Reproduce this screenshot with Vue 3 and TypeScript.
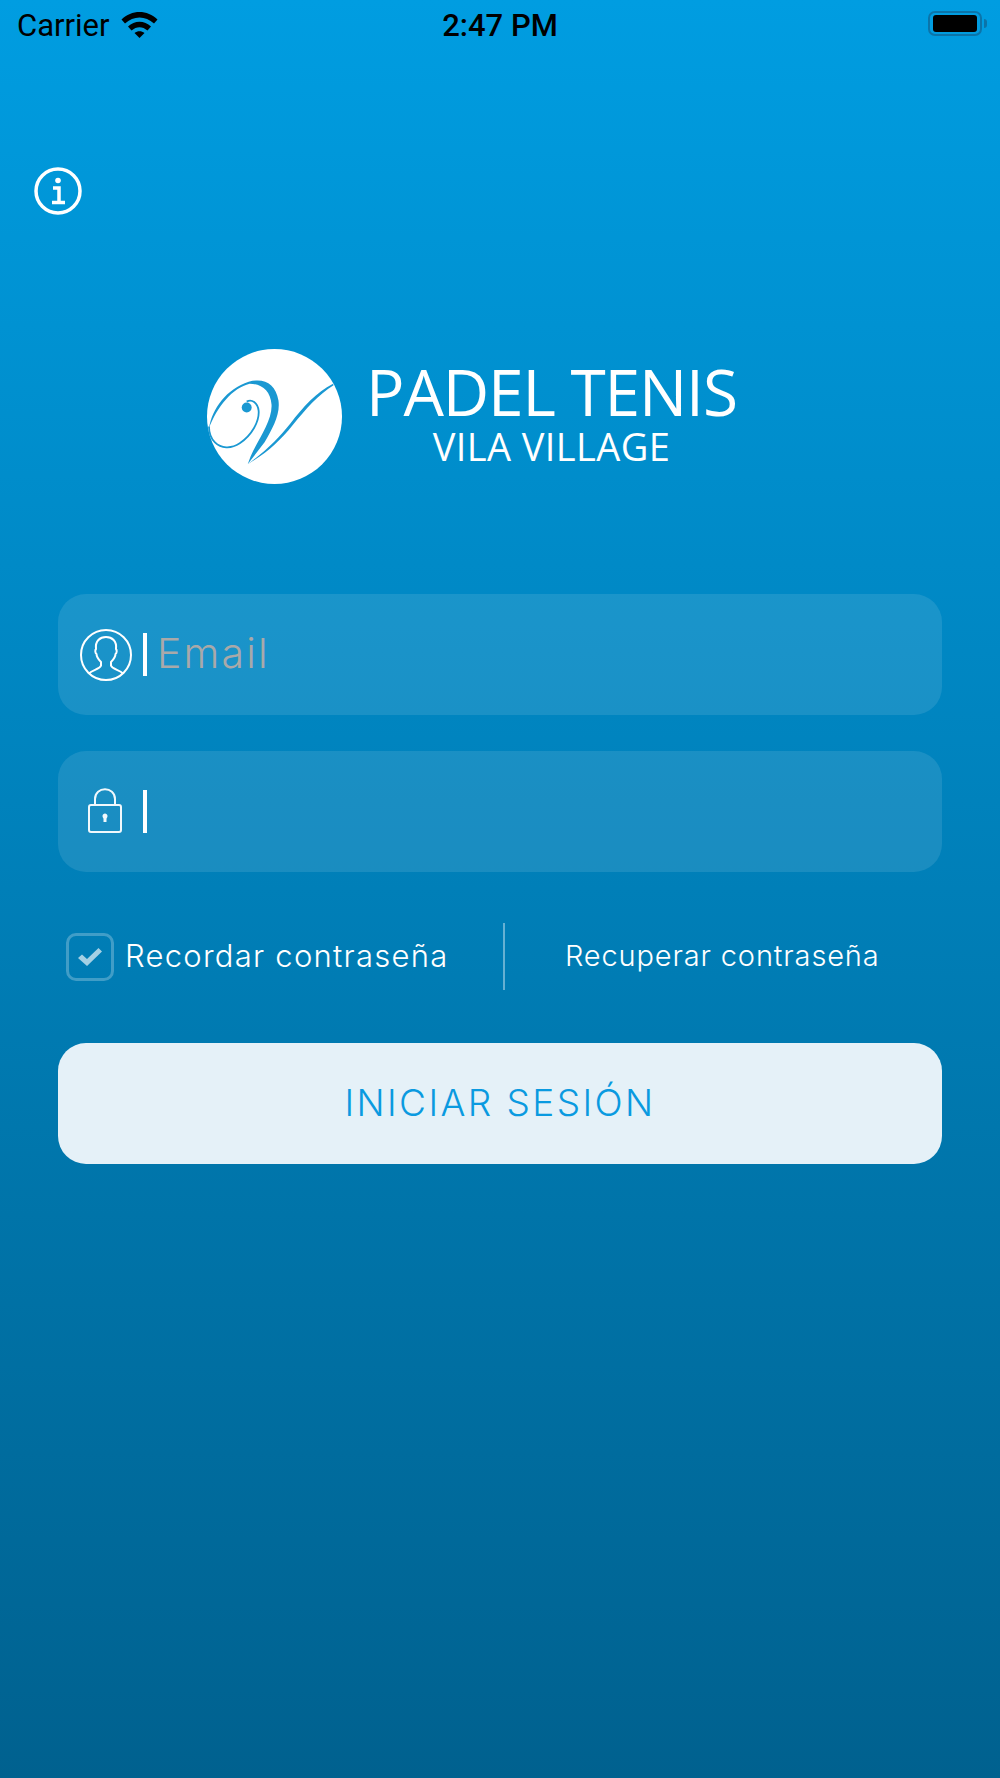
<template>
  <div class="screen">
    <!-- Status bar -->
    <div class="status-bar">
      <div class="status-left">
        <span class="carrier">Carrier</span>
        <svg class="wifi" viewBox="0 0 37 27" width="37" height="27">
          <path d="M0.500 8.500C10.500 -1.500 26.500 -1.500 36.500 8.500L33 12.500C24.500 4.500 12.500 4.500 4 12.500Z" />
          <path d="M7 15.500C13.500 9 23.500 9 30 15.500L26.500 19.500C21.500 15 15.500 15 10.500 19.500Z" />
          <path d="M13.500 22C16.500 19.500 20.500 19.500 23.500 22L18.500 27Z" />
        </svg>
      </div>
      <span class="time">2:47 PM</span>
      <div class="battery">
        <div class="battery-body"><div class="battery-level"></div></div>
        <div class="battery-tip"></div>
      </div>
    </div>

    <!-- Info button -->
    <button class="info-button" type="button" aria-label="Info">
      <svg viewBox="0 0 48 48" width="48" height="48" fill="none" stroke="#fff">
        <circle cx="24" cy="24" r="22" stroke-width="3.5" />
        <circle cx="24" cy="13.500" r="2.800" fill="#fff" stroke="none" />
        <path d="M19 21H25V35M18 35.500H31" stroke-width="3.500" />
      </svg>
    </button>

    <!-- Logo -->
    <div class="logo">
      <svg class="logo-mark" viewBox="0 0 136 136" width="135" height="135">
        <circle cx="68" cy="68" r="68" fill="#fff" />
        <path
          d="M2 80C5 60 20 40 42 33C58 29 69 35 72 52C74 66 66 80 58 94L41 116L44 108C52 90 66 72 65 56C64 42 55 35 43 35C26 39 10 58 2 80Z"
          fill="#1a98d2"
        />
        <path
          d="M41 116C60 102 72 90 84 75C97 58 110 44 127 35L127.500 36.500C112 46 100 60 86 77C73 93 60 105 41 116Z"
          fill="#1a98d2"
        />
        <path
          d="M2 78C2 86 4 90 8 94C14 100 24 101 33 95C45 87 53 73 52 62C51 54 45 50 40 53"
          fill="none"
          stroke="#1a98d2"
          stroke-width="1.800"
        />
        <circle cx="40" cy="59" r="5" fill="#1a98d2" />
      </svg>
      <div class="logo-text">
        <div class="logo-title">PADEL TENIS</div>
        <div class="logo-sub">VILA VILLAGE</div>
      </div>
    </div>

    <!-- Login form -->
    <form class="login-form" @submit.prevent>
      <div class="field">
        <span class="field-icon">
          <svg viewBox="0 0 52 52" width="52" height="52" fill="none" stroke="#fff" stroke-width="2">
            <circle cx="26" cy="26" r="25" />
            <path d="M9 44.500C12 41 20 40 21 36.500V33C18 30 16.500 27 16.500 25C15 24 15 21 16 20C15 12 20 8 26 8C32 8 37 12 36 20C37 21 37 24 35.500 25C35.500 27 34 30 31 33V36.500C32 40 40 41 43 44.500" stroke-linejoin="round" />
          </svg>
        </span>
        <span class="field-bar"></span>
        <input v-model="email" class="field-input" type="email" placeholder="Email" />
      </div>

      <div class="field">
        <span class="field-icon">
          <svg class="lock-icon" viewBox="0 0 34 45" width="34" height="45" fill="none" stroke="#f1f8fc" stroke-width="2">
            <rect x="1" y="17" width="32" height="27" rx="2" />
            <path d="M7 17V11C7 -2 27 -2 27 11V17" />
            <path d="M14.500 28C14.500 24.500 19.500 24.500 19.500 28C19.500 29.500 18.500 30 18.500 31V34H15.500V31C15.500 30 14.500 29.500 14.500 28Z" fill="#f1f8fc" stroke="none" />
          </svg>
        </span>
        <span class="field-bar"></span>
        <input v-model="password" class="field-input" type="password" />
      </div>

      <div class="options">
        <label class="remember">
          <span class="checkbox">
            <svg viewBox="0 0 26 20" width="26" height="20">
              <path d="M1 11L5 7.500L10 12L21.500 1L25 4.500L10 19Z" fill="#a4d0e4" />
            </svg>
          </span>
          <span class="remember-text">Recordar contraseña</span>
        </label>
        <span class="options-divider"></span>
        <a class="recover" href="#" @click.prevent>Recuperar contraseña</a>
      </div>

      <button class="submit" type="submit">INICIAR SESIÓN</button>
    </form>
  </div>
</template>

<script setup lang="ts">
import { ref } from 'vue'

const email = ref('')
const password = ref('')
</script>

<style>
html,
body {
  margin: 0;
}
</style>

<style scoped>
.screen {
  box-sizing: border-box;
  width: 1000px;
  height: 1778px;
  overflow: hidden;
  background: linear-gradient(to bottom, #009de1 0%, #00618f 100%);
  color: #fff;
  font-family: Inter, "Liberation Sans", sans-serif;
}

.status-bar {
  display: grid;
  grid-template-columns: 1fr auto 1fr;
  align-items: center;
  height: 50px;
  padding: 0 13px 0 17px;
  color: #000;
  font-family: Roboto, "Liberation Sans", sans-serif;
}

.status-left {
  display: flex;
  align-items: center;
  gap: 11px;
}

.carrier {
  font-size: 31px;
}

.wifi {
  fill: #000;
  margin-top: -2px;
}

.time {
  margin-right: 4px;
  font-size: 31px;
  font-weight: 500;
}

.battery {
  justify-self: end;
  display: flex;
  align-items: center;
  gap: 2px;
  margin-top: -4px;
}

.battery-body {
  box-sizing: border-box;
  width: 54px;
  height: 25px;
  padding: 2px 3px;
  border: 2.5px solid #0b74a9;
  border-radius: 7px;
}

.battery-level {
  height: 100%;
  background: #000;
  border-radius: 3px;
}

.battery-tip {
  width: 3px;
  height: 9px;
  background: #0b74a9;
  border-radius: 0 3px 3px 0;
}

.info-button {
  display: block;
  margin: 117px 0 0 34px;
  padding: 0;
  border: 0;
  background: none;
  line-height: 0;
}

.logo {
  display: flex;
  align-items: center;
  gap: 24px;
  margin: 134px 0 0 207px;
  font-family: "Open Sans", sans-serif;
}

.logo-text {
  padding-bottom: 9px;
  text-align: center;
}

.logo-title {
  font-size: 64px;
  line-height: 68px;
  letter-spacing: -1.1px;
}

.logo-sub {
  font-size: 38px;
  line-height: 40px;
  letter-spacing: 0.4px;
}

.login-form {
  display: flex;
  flex-direction: column;
  margin: 110px 58px 0;
}

.field {
  display: flex;
  align-items: center;
  height: 121px;
  margin-bottom: 36px;
  padding-left: 22px;
  border-radius: 28px;
  background: rgba(255, 255, 255, 0.1);
}

.field-icon {
  display: flex;
  align-items: center;
  justify-content: center;
  width: 52px;
  height: 52px;
}

.lock-icon {
  margin: -2px 0 0 -3px;
}

.field-bar {
  width: 4px;
  height: 43px;
  margin: 0 10px 0 11px;
  background: #fff;
}

.field-input {
  flex: 1;
  min-width: 0;
  padding: 0 0 4px;
  border: 0;
  outline: 0;
  background: transparent;
  color: #fff;
  font-family: inherit;
  font-size: 41px;
  font-weight: 300;
  letter-spacing: 2.2px;
}

.field-input::placeholder {
  color: #a9a9a9;
  opacity: 1;
}

.options {
  display: flex;
  align-items: center;
  height: 67px;
  margin-top: 15px;
}

.remember {
  display: flex;
  align-items: center;
  gap: 11px;
  width: 445px;
  padding-left: 8px;
  box-sizing: border-box;
  font-size: 31px;
  font-weight: 300;
  letter-spacing: 1.25px;
}

.remember-text {
  margin-top: -2px;
}

.checkbox {
  display: flex;
  align-items: center;
  justify-content: center;
  box-sizing: border-box;
  width: 48px;
  height: 48px;
  border: 3px solid rgba(255, 255, 255, 0.25);
  border-radius: 10px;
}

.options-divider {
  width: 2px;
  height: 67px;
  background: rgba(255, 255, 255, 0.4);
}

.recover {
  margin: -2px 0 0 60px;
  color: #fff;
  font-size: 29px;
  font-weight: 300;
  letter-spacing: 0.85px;
  text-decoration: none;
}

.submit {
  height: 121px;
  margin-top: 53px;
  padding: 0 0 2px;
  border: 0;
  border-radius: 28px;
  background: #e5f1f8;
  color: #0a9ae0;
  font-family: inherit;
  font-size: 37px;
  font-weight: 300;
  letter-spacing: 2.4px;
}
</style>
